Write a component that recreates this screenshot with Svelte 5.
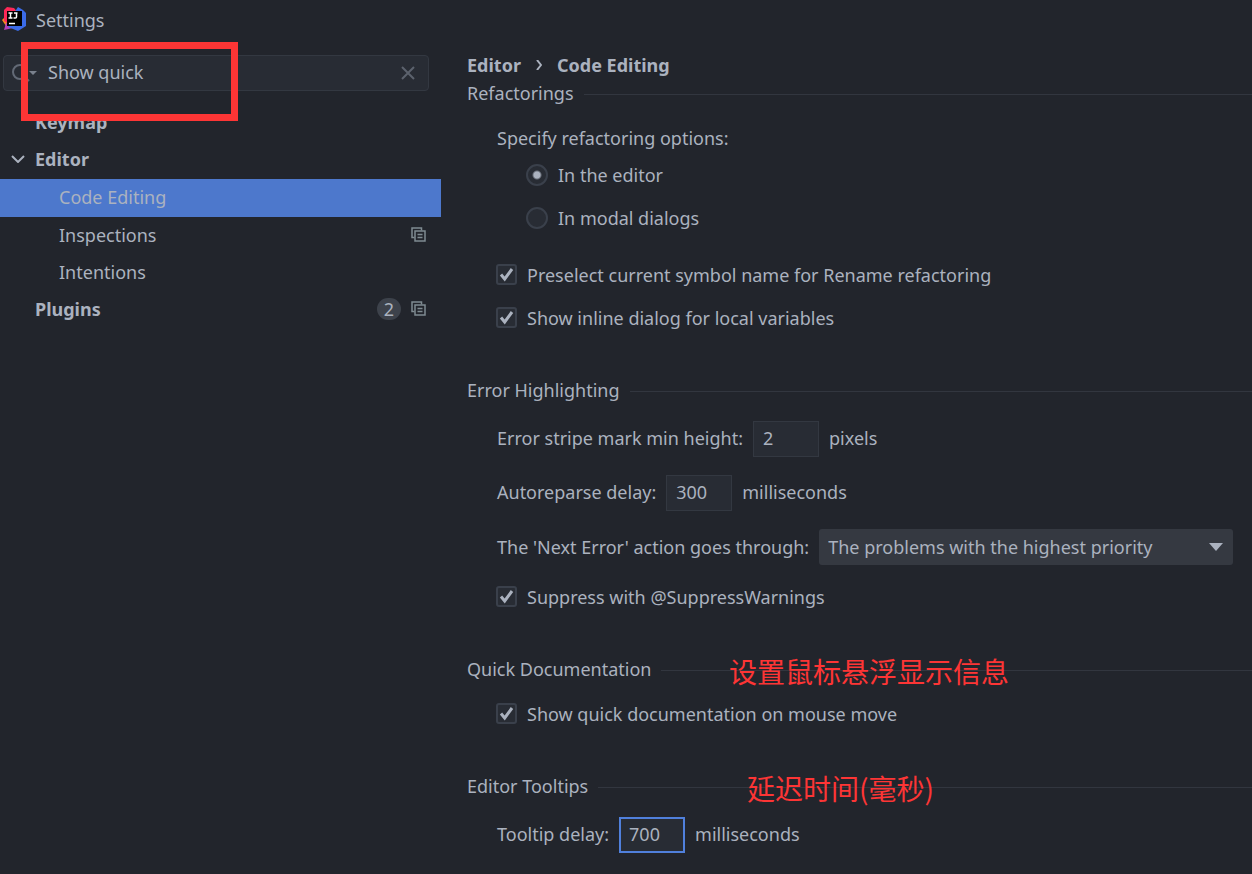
<script>
  let query = $state('Show quick');
  let mode = $state('editor');
  let preselect = $state(true);
  let inline = $state(true);
  let suppress = $state(true);
  let quickDoc = $state(true);
  let stripe = $state('2');
  let reparse = $state('300');
  let tooltip = $state('700');
</script>

{#snippet check()}
  <svg class="tick" viewBox="0 0 21 21" aria-hidden="true"><path d="M5 10.500l3.700 4.500L16 5" /></svg>
{/snippet}

{#snippet copyIcon()}
  <svg class="copy" viewBox="0 0 15 15" aria-hidden="true">
    <path d="M3.500 10.500H1V1h9.500v2.500" />
    <path d="M4 4h10v10H4zM6.500 7.500h5M6.500 10.500h5" />
  </svg>
{/snippet}

<div class="window">
  <header>
    <svg class="logo" viewBox="0 0 24 24" aria-hidden="true">
      <path d="M0 13L4 9l5 6-5 4z" fill="#f68b1f" />
      <path d="M2 3l3-3 7 1 4 5-9 11-5-3z" fill="#fe2857" />
      <path d="M4 16l-2 7 9-2 2-4z" fill="#b03fb8" />
      <path d="M12 6l4-6 5 3 3 3v13l-8 5-10-4z" fill="#3b6be8" />
      <path d="M5 4h15v15H5z" fill="#000" />
      <path d="M6.500 6h4M8.500 6v5M6.500 11h4M12 6h3.500M14.500 6v4q0 1-1 1h-2M7 16.500h6" fill="none" stroke="#fff" stroke-width="1.500" />
    </svg>
    <h1>Settings</h1>
  </header>

  <aside>
    <div class="search">
      <svg class="glass" viewBox="0 0 28 24" aria-hidden="true">
        <circle cx="9" cy="11" r="7" />
        <path d="M14 16l4 4" />
        <path class="fill" d="M18 10h8l-4 4z" />
      </svg>
      <input type="text" aria-label="Search settings" bind:value={query} />
      <button type="button" aria-label="Clear search" onclick={() => (query = '')}>
        <svg viewBox="0 0 12 12" aria-hidden="true"><path d="M0 0l12 12M12 0L0 12" /></svg>
      </button>
      <div class="frame"></div>
    </div>
    <nav aria-label="Settings sections">
      <a class="top" href="#keymap">Keymap</a>
      <a class="top" href="#editor">
        <svg class="chevron" viewBox="0 0 14 8" aria-hidden="true"><path d="M1 1l6 6 6-6" /></svg>Editor
      </a>
      <a class="selected" href="#code-editing" aria-current="page">Code Editing</a>
      <a href="#inspections">Inspections<span class="marks">{@render copyIcon()}</span></a>
      <a href="#intentions">Intentions</a>
      <a class="top" href="#plugins">Plugins<span class="marks"><span class="badge">2</span>{@render copyIcon()}</span></a>
    </nav>
  </aside>

  <main>
    <div class="crumbs">
      <span>Editor</span>
      <svg viewBox="0 0 6 10" aria-hidden="true"><path d="M1 0l4 5-4 5" /></svg>
      <span>Code Editing</span>
    </div>

    <section>
      <h2>Refactorings</h2>
      <div class="rows" role="radiogroup" aria-labelledby="refactoring-options">
        <div class="row" id="refactoring-options">Specify refactoring options:</div>
        <label class="row radio first"><input type="radio" value="editor" bind:group={mode} />In the editor</label>
        <label class="row radio"><input type="radio" value="modal" bind:group={mode} />In modal dialogs</label>
      </div>
      <div class="rows boxes">
        <label class="row"><span class="box"><input type="checkbox" bind:checked={preselect} />{@render check()}</span>Preselect current symbol name for Rename refactoring</label>
        <label class="row"><span class="box"><input type="checkbox" bind:checked={inline} />{@render check()}</span>Show inline dialog for local variables</label>
      </div>
    </section>

    <section>
      <h2>Error Highlighting</h2>
      <div class="rows wide">
        <div class="row field"><label for="stripe">Error stripe mark min height:</label><input class="num" id="stripe" type="text" bind:value={stripe} /><span>pixels</span></div>
        <div class="row field"><label for="reparse">Autoreparse delay:</label><input class="num" id="reparse" type="text" bind:value={reparse} /><span>milliseconds</span></div>
        <div class="row">
          <label for="next">The 'Next Error' action goes through:</label>
          <span class="dropdown">
            <select id="next"><option>The problems with the highest priority</option></select>
            <svg viewBox="0 0 14 8" aria-hidden="true"><path d="M0 0h14L7 8z" /></svg>
          </span>
        </div>
        <label class="row"><span class="box"><input type="checkbox" bind:checked={suppress} />{@render check()}</span>Suppress with @SuppressWarnings</label>
      </div>
    </section>

    <section>
      <h2>Quick Documentation</h2>
      <p class="note hover" lang="zh">设置鼠标悬浮显示信息</p>
      <div class="rows">
        <label class="row"><span class="box"><input type="checkbox" bind:checked={quickDoc} />{@render check()}</span>Show quick documentation on mouse move</label>
      </div>
    </section>

    <section>
      <h2>Editor Tooltips</h2>
      <p class="note delay" lang="zh">延迟时间(毫秒)</p>
      <div class="rows">
        <div class="row field"><label for="tooltip">Tooltip delay:</label><input class="num active" id="tooltip" type="text" bind:value={tooltip} /><span>milliseconds</span></div>
      </div>
    </section>
  </main>
</div>

<style>
  :global(body) {
    margin: 0;
    background: #22252c;
  }
  .window {
    display: grid;
    grid-template-columns: 441fr 811fr;
    grid-template-rows: 40px 1fr;
    min-height: 100vh;
    overflow: hidden;
    background: #22252c;
    color: #abb2bf;
    font: 18px/28px "Noto Sans", "Open Sans", "Noto Sans CJK SC", sans-serif;
  }
  input, select, button {
    box-sizing: border-box;
    margin: 0;
    font: inherit;
    color: inherit;
    outline: none;
  }
  svg {
    display: block;
    flex: none;
  }
  header {
    grid-column: 1 / -1;
    display: flex;
    align-items: center;
    gap: 10px;
    padding-left: 2px;
  }
  .logo {
    width: 24px;
    height: 24px;
    margin-bottom: 2px;
  }
  h1, h2, p {
    margin: 0;
    font-size: inherit;
    font-weight: 400;
  }
  .search {
    position: relative;
    display: flex;
    align-items: center;
    box-sizing: border-box;
    height: 36px;
    margin: 15px 12px 13px 3px;
    padding: 0 14px 0 7px;
    border: 1px solid #333841;
    border-radius: 4px;
    background: #282c34;
  }
  .glass {
    width: 28px;
    height: 24px;
    fill: none;
    stroke: #636a76;
    stroke-width: 2;
  }
  .glass .fill {
    fill: #7a818d;
    stroke: none;
  }
  .search input {
    flex: 1;
    min-width: 0;
    padding: 0 9px 2px;
    border: 0;
    background: none;
  }
  .search button {
    padding: 0;
    border: 0;
    background: none;
  }
  .search button svg {
    width: 12px;
    height: 12px;
    overflow: visible;
    stroke: #5c626d;
    stroke-width: 2;
  }
  .frame {
    position: absolute;
    top: -14px;
    left: 17px;
    box-sizing: border-box;
    width: 217px;
    height: 79px;
    border: 7px solid #fd3535;
    pointer-events: none;
  }
  nav a {
    display: flex;
    align-items: center;
    box-sizing: border-box;
    height: 37px;
    padding: 0 15px 2px 59px;
    color: inherit;
    text-decoration: none;
  }
  nav a:nth-child(2), nav .selected {
    height: 38px;
  }
  nav .top {
    padding-left: 35px;
    font-weight: 700;
  }
  nav .selected {
    background: #4d78cc;
  }
  .chevron {
    width: 14px;
    height: 8px;
    margin: 0 10px 0 -24px;
    fill: none;
    stroke: #abb2bf;
    stroke-width: 2;
  }
  .marks {
    display: flex;
    align-items: center;
    gap: 10px;
    margin-left: auto;
    font-weight: 400;
  }
  .badge {
    width: 24px;
    border-radius: 11px;
    background: #3d424b;
    line-height: 22px;
    text-align: center;
  }
  .copy {
    width: 15px;
    height: 15px;
    fill: none;
    stroke: #7f8b91;
    stroke-width: 1.500;
  }
  main {
    min-width: 0;
    padding: 11px 0 21px 26px;
  }
  .crumbs {
    display: flex;
    align-items: center;
    gap: 15px;
    font-weight: 700;
  }
  .crumbs svg {
    width: 6px;
    height: 10px;
    fill: none;
    stroke: #abb2bf;
    stroke-width: 2;
  }
  section {
    position: relative;
  }
  section + section {
    margin-top: 44px;
  }
  h2 {
    display: flex;
    align-items: center;
    gap: 10px;
    margin-bottom: 17px;
  }
  h2::after {
    content: "";
    flex: 1;
    height: 1px;
    margin-top: 2px;
    background: #32363f;
  }
  .rows {
    display: flex;
    flex-direction: column;
    gap: 15px;
    padding: 0 19px 0 30px;
  }
  .wide {
    gap: 18px;
  }
  .boxes {
    margin-top: 29px;
  }
  .row {
    display: flex;
    align-items: center;
    gap: 10px;
  }
  .field > label, .field > span {
    padding-bottom: 2px;
  }
  .radio {
    padding-left: 29px;
  }
  .first {
    margin-top: -6px;
  }
  .radio input {
    appearance: none;
    width: 22px;
    height: 22px;
    border: 2px solid #3a404b;
    border-radius: 50%;
    background: #282c34;
  }
  .radio input:checked {
    background: radial-gradient(circle, #abb2bf 3px, #282c34 5px);
  }
  .box {
    display: grid;
    flex: none;
    width: 21px;
    height: 21px;
    margin: 0 0 2px -1px;
  }
  .box input, .tick {
    grid-area: 1 / 1;
    width: 21px;
    height: 21px;
  }
  .box input {
    appearance: none;
    border: 2px solid #3a404b;
    border-radius: 3px;
    background: #282c34;
  }
  .tick {
    visibility: hidden;
    fill: none;
    stroke: #abb2bf;
    stroke-width: 3;
    pointer-events: none;
  }
  .box input:checked + .tick {
    visibility: visible;
  }
  .num {
    width: 66px;
    height: 36px;
    padding: 0 9px 2px;
    border: 1px solid #333841;
    background: #282c34;
  }
  .active {
    border: 2px solid #5080dc;
    padding: 0 8px 2px;
  }
  .dropdown {
    display: grid;
    flex: 1;
    align-items: center;
    min-width: 0;
  }
  .dropdown select {
    grid-area: 1 / 1;
    appearance: none;
    width: 100%;
    height: 36px;
    padding: 0 36px 0 9px;
    border: 0;
    border-radius: 3px;
    background: #353941;
  }
  .dropdown svg {
    grid-area: 1 / 1;
    justify-self: end;
    width: 14px;
    height: 8px;
    margin-right: 10px;
    fill: #abb2bf;
    pointer-events: none;
  }
  .note {
    position: absolute;
    top: -4px;
    color: #fd3535;
    font: 28px/40px "Noto Sans CJK SC", sans-serif;
    white-space: nowrap;
  }
  .hover {
    left: 262px;
  }
  .delay {
    left: 280px;
  }
</style>
